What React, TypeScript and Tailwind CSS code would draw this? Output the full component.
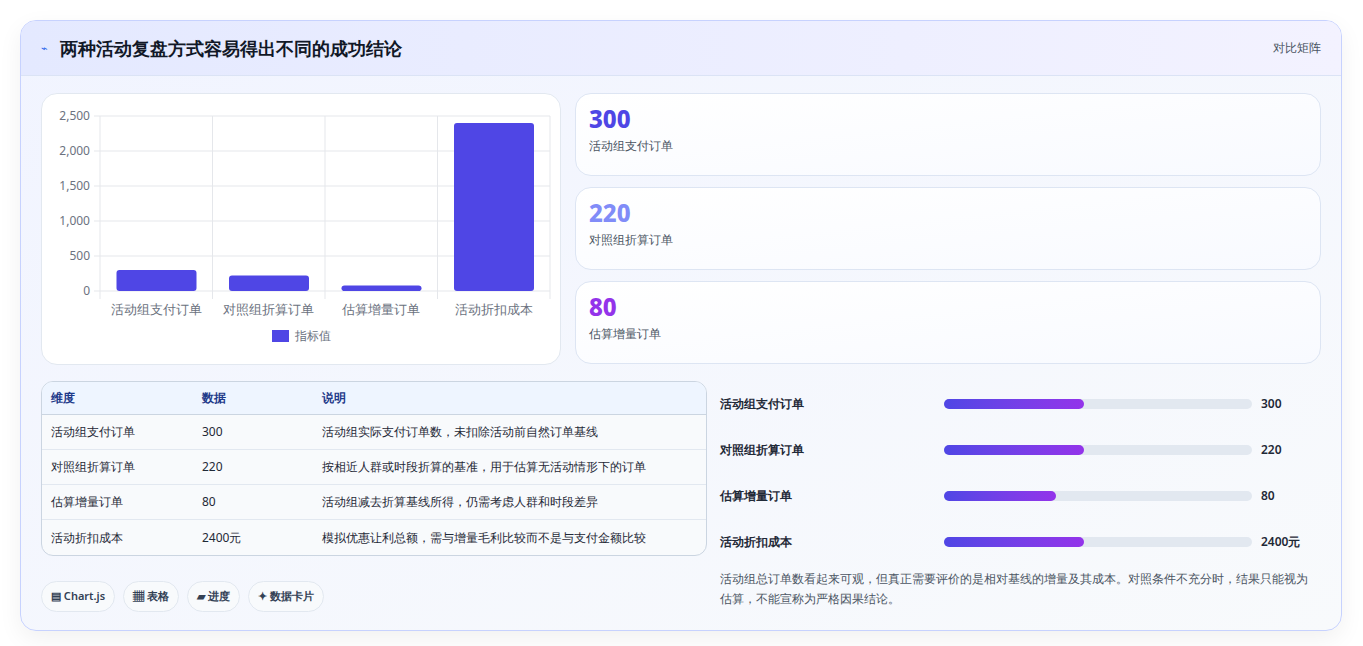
import React from "react";

const rows = [
  { k: "活动组支付订单", v: "300", d: "活动组实际支付订单数，未扣除活动前自然订单基线", w: 140 },
  { k: "对照组折算订单", v: "220", d: "按相近人群或时段折算的基准，用于估算无活动情形下的订单", w: 140 },
  { k: "估算增量订单", v: "80", d: "活动组减去折算基线所得，仍需考虑人群和时段差异", w: 112 },
  { k: "活动折扣成本", v: "2400元", d: "模拟优惠让利总额，需与增量毛利比较而不是与支付金额比较", w: 140 },
];

const stats = [
  { v: "300", l: "活动组支付订单", c: "text-[#4f46e5]" },
  { v: "220", l: "对照组折算订单", c: "text-[#818cf8]" },
  { v: "80", l: "估算增量订单", c: "text-[#9333ea]" },
];

function Chart() {
  const vals = [300, 220, 80, 2400];
  const labels = ["活动组支付订单", "对照组折算订单", "估算增量订单", "活动折扣成本"];
  const ticks = [0, 500, 1000, 1500, 2000, 2500];
  const y = (v: number) => 197 - (v / 2500) * 175;
  return (
    <svg width="520" height="270" className="block">
      {ticks.map((t) => (
        <g key={t}>
          <line x1="52" x2="508" y1={y(t)} y2={y(t)} stroke="#e5e7eb" />
          <text x="48" y={y(t) + 4} textAnchor="end" fontSize="12" fill="#6b7280">
            {t.toLocaleString("en-US")}
          </text>
        </g>
      ))}
      {[0, 1, 2, 3, 4].map((i) => (
        <line key={i} x1={58 + i * 112.5} x2={58 + i * 112.5} y1="22" y2="205" stroke="#e5e7eb" />
      ))}
      {vals.map((v, i) => (
        <rect key={i} x={58 + i * 112.5 + 16.5} y={y(v)} width="80" height={197 - y(v)} rx="3" fill="#4f46e5" />
      ))}
      {labels.map((l, i) => (
        <text key={l} x={58 + i * 112.5 + 56} y="220" textAnchor="middle" fontSize="13" fill="#6b7280">
          {l}
        </text>
      ))}
      <rect x="230" y="236" width="17" height="12" fill="#4f46e5" />
      <text x="253" y="246" fontSize="12" fill="#6b7280">指标值</text>
    </svg>
  );
}

export default function App() {
  return (
    <div className="min-h-[646px] bg-white p-5 font-['Noto_Sans_CJK_SC','Noto_Sans',sans-serif]">
      <div className="w-[1322px] overflow-hidden rounded-2xl border border-[#c7d2fe] bg-gradient-to-br from-[#f1f4ff] to-[#f8fafc] shadow-[0_8px_24px_rgba(0,0,0,0.06)]">
        <div className="flex h-[55px] items-center justify-between border-b border-[#dbe3f5] bg-gradient-to-r from-[#e4e9ff] to-[#f3f2ff] px-5">
          <div className="flex items-center gap-3">
            <span className="text-[11px] text-[#2563eb]">⌁</span>
            <span className="text-[18px] font-bold text-[#111827]">两种活动复盘方式容易得出不同的成功结论</span>
          </div>
          <span className="text-[12px] text-[#4b5563]">对比矩阵</span>
        </div>
        <div className="flex flex-col gap-4 px-5 pt-[17px] pb-[18px]">
          <div className="flex gap-[14px]">
            <div className="h-[272px] w-[520px] rounded-2xl border border-[#e2e8f0] bg-white">
              <Chart />
            </div>
            <div className="flex flex-1 flex-col gap-[11px]">
              {stats.map((s) => (
                <div key={s.v} className="h-[83px] rounded-2xl border border-[#dde5f3] bg-gradient-to-br from-white to-[#f8faff] px-[13px] pt-[10px]">
                  <div className={`text-[24px] font-extrabold leading-[30px] ${s.c}`}>{s.v}</div>
                  <div className="mt-[3px] text-[12px] text-[#4b5563]">{s.l}</div>
                </div>
              ))}
            </div>
          </div>
          <div className="flex gap-[13px]">
            <div className="flex w-[666px] flex-col gap-[25px]">
              <div className="overflow-hidden rounded-xl border border-[#cbd5e1] bg-[#f8fafc] text-[12px]">
                <div className="flex h-[33px] items-center border-b border-[#cbd5e1] bg-[#eef5ff] font-semibold text-[#1e3a8a]">
                  <span className="w-[160px] pl-[9px]">维度</span>
                  <span className="w-[120px]">数据</span>
                  <span>说明</span>
                </div>
                {rows.map((r, i) => (
                  <div key={r.k} className={`flex h-[35px] items-center text-[#1f2937] ${i < 3 ? "border-b border-[#e2e8f0]" : ""}`}>
                    <span className="w-[160px] pl-[9px]">{r.k}</span>
                    <span className="w-[120px]">{r.v}</span>
                    <span>{r.d}</span>
                  </div>
                ))}
              </div>
              <div className="flex gap-2 text-[11px] font-semibold text-[#334155]">
                {["▤ Chart.js", "▦ 表格", "▰ 进度", "✦ 数据卡片"].map((c) => (
                  <span key={c} className="rounded-full border border-[#e2e8f0] bg-[#f8fafc] px-[9px] py-[6px]">{c}</span>
                ))}
              </div>
            </div>
            <div className="flex flex-1 flex-col">
              {rows.map((r) => (
                <div key={r.k} className="flex h-[46px] items-center text-[12px] font-semibold text-[#1f2937]">
                  <span className="w-[224px]">{r.k}</span>
                  <div className="h-[10px] w-[308px] rounded-full bg-[#e2e8f0]">
                    <div className="h-full rounded-full bg-gradient-to-r from-[#4f46e5] to-[#9333ea]" style={{ width: r.w }} />
                  </div>
                  <span className="ml-[9px]">{r.v}</span>
                </div>
              ))}
              <p className="mt-[4px] pr-2 text-[12px] leading-[20px] text-[#4b5563]">
                活动组总订单数看起来可观，但真正需要评价的是相对基线的增量及其成本。对照条件不充分时，结果只能视为估算，不能宣称为严格因果结论。
              </p>
            </div>
          </div>
        </div>
      </div>
    </div>
  );
}
